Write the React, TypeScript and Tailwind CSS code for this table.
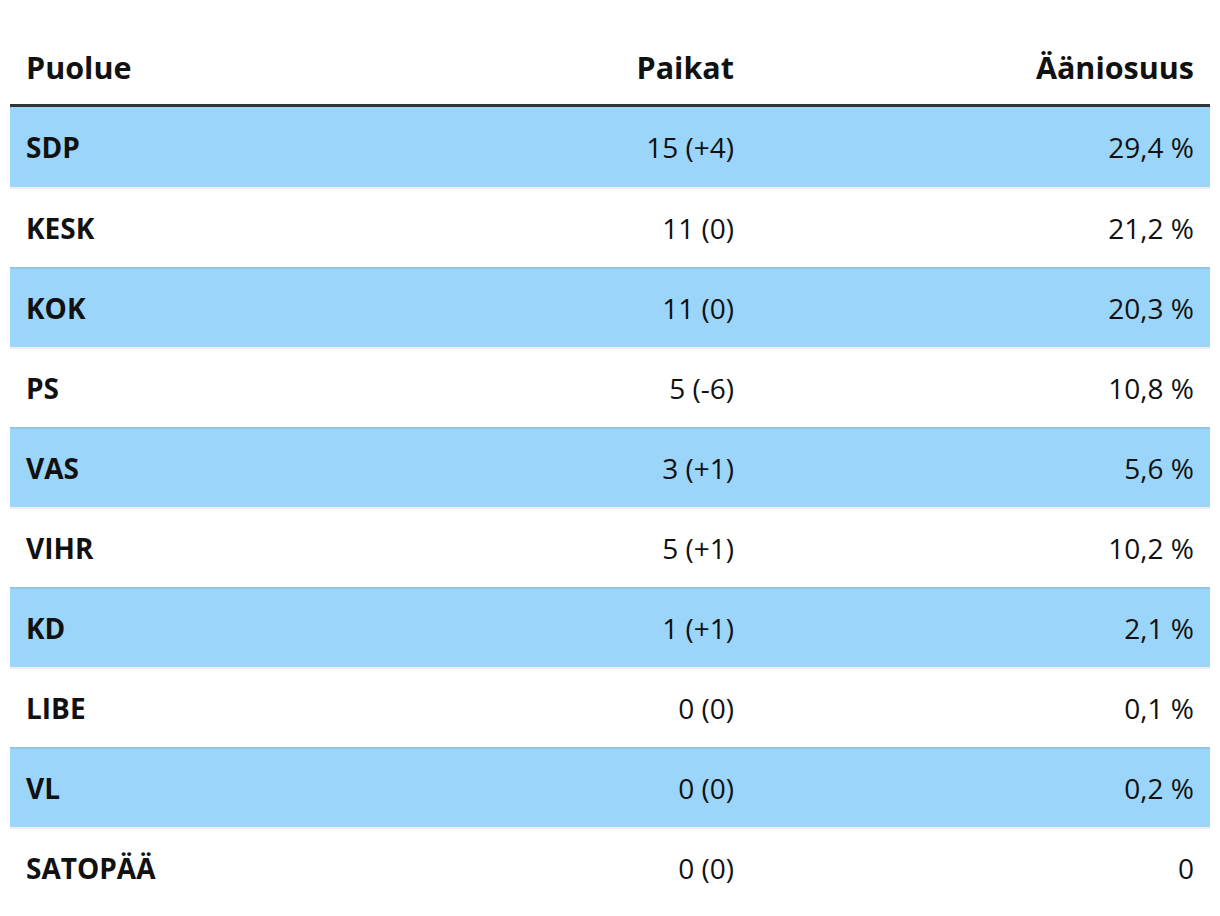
import React from 'react';

const rows = [
  { party: 'SDP', seats: '15 (+4)', share: '29,4 %' },
  { party: 'KESK', seats: '11 (0)', share: '21,2 %' },
  { party: 'KOK', seats: '11 (0)', share: '20,3 %' },
  { party: 'PS', seats: '5 (-6)', share: '10,8 %' },
  { party: 'VAS', seats: '3 (+1)', share: '5,6 %' },
  { party: 'VIHR', seats: '5 (+1)', share: '10,2 %' },
  { party: 'KD', seats: '1 (+1)', share: '2,1 %' },
  { party: 'LIBE', seats: '0 (0)', share: '0,1 %' },
  { party: 'VL', seats: '0 (0)', share: '0,2 %' },
  { party: 'SATOPÄÄ', seats: '0 (0)', share: '0' },
];

const App: React.FC = () => {
  return (
    <div className="bg-white px-[10px] pt-[30px] text-[#111] font-['Open_Sans',sans-serif]">
      <div className="grid grid-cols-[400px_340px_460px] border-b-[3px] border-[#333] pb-[16px] pt-[16px] text-[30.5px] font-bold leading-[42px]">
        <div className="px-4">Puolue</div>
        <div className="px-4 text-right">Paikat</div>
        <div className="px-4 text-right">Ääniosuus</div>
      </div>
      {rows.map((r, i) => (
        <div
          key={r.party}
          className={`grid h-[80px] grid-cols-[400px_340px_460px] items-center text-[28px] leading-[40px] ${
            i === 0 ? '' : 'border-t-2 border-black/[0.07]'
          } ${i % 2 === 0 ? 'bg-[#9bd5fa]' : 'bg-white'}`}
        >
          <div className="px-4 font-bold">{r.party}</div>
          <div className="px-4 text-right">{r.seats}</div>
          <div className="px-4 text-right">{r.share}</div>
        </div>
      ))}
    </div>
  );
};

export default App;
